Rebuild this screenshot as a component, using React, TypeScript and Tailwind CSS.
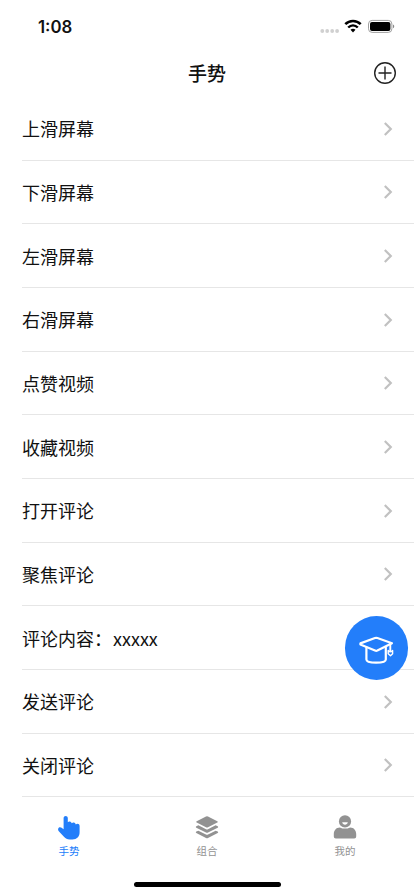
import React from "react";

const gestures = [
  { label: "上滑屏幕" },
  { label: "下滑屏幕" },
  { label: "左滑屏幕" },
  { label: "右滑屏幕" },
  { label: "点赞视频" },
  { label: "收藏视频" },
  { label: "打开评论" },
  { label: "聚焦评论" },
  { label: "评论内容：", value: "xxxxx" },
  { label: "发送评论" },
  { label: "关闭评论" },
];

function StatusBar() {
  return (
    <div className="flex h-[49px] shrink-0 items-start justify-between pr-[19px] pl-[38px]">
      <span className="mt-[15px] font-['Inter','Liberation_Sans',sans-serif] text-[16.8px] leading-6 font-semibold">1:08</span>
      <div className="mt-[19px] flex items-start">
        <svg width="19" height="16" viewBox="0 0 19 16" fill="#d0d0d0">
          <circle cx="2.3" cy="12" r="1.9" />
          <circle cx="7.2" cy="12" r="1.9" />
          <circle cx="12.2" cy="12" r="1.9" />
          <circle cx="17.1" cy="12" r="1.9" />
        </svg>
        <svg className="ml-[5px]" width="18" height="14" viewBox="0 0 18 14" fill="none" stroke="#000">
          <path d="M1.3 5.1C5.6.9 12.4.9 16.7 5.1" strokeWidth="2.6" />
          <path d="M4.2 8.5C7 5.6 11 5.6 13.8 8.5" strokeWidth="2.4" />
          <path d="M6.5 10.8C8 9.4 10 9.4 11.5 10.8L9 13.4Z" fill="#000" stroke="none" />
        </svg>
        <svg className="ml-[6px]" width="27" height="15" viewBox="0 0 27 15">
          <rect x="0.5" y="1.4" width="23.4" height="12" rx="3.6" fill="none" stroke="#a0a0a0" />
          <rect x="2" y="2.9" width="20.4" height="9" rx="2" />
          <path d="M25 5.6c1.7.5 1.7 3.2 0 3.7Z" fill="#888" />
        </svg>
      </div>
    </div>
  );
}

function Header() {
  return (
    <header className="grid h-12 shrink-0 grid-cols-[1fr_auto_1fr] items-center px-[17px]">
      <h1 className="col-start-2 text-[19px] leading-6 font-medium">手势</h1>
      <svg className="justify-self-end" width="24" height="24" viewBox="0 0 24 24" fill="none" stroke="#222" strokeWidth="1.4">
        <circle cx="12" cy="12" r="10.3" />
        <path d="M12 5.5v13M5.5 12h13" />
      </svg>
    </header>
  );
}

function GestureRow({ label, value }: { label: string; value?: string }) {
  return (
    <li className="ml-[22px] flex h-[63.67px] items-center justify-between border-b border-[#e6e6e6] pr-[21px]">
      <span className="text-[18px] leading-6">
        {label}
        {value && <span className="ml-px">{value}</span>}
      </span>
      <svg className="mt-px" width="10" height="14" viewBox="0 0 10 14" fill="none" stroke="#c1c1c1" strokeWidth="2.2">
        <path d="M1.8 1l6 6-6 6" />
      </svg>
    </li>
  );
}

function HelpButton() {
  return (
    <button aria-label="help" className="absolute top-[616.4px] left-[344.6px] flex h-[63.6px] w-[63.6px] items-center justify-center rounded-full bg-[#237efa]">
      <svg width="38" height="32" viewBox="0 0 38 32" fill="none" stroke="#fff" strokeWidth="2.2" strokeLinejoin="round" strokeLinecap="round">
        <path d="M3.4 11.4L18 6Q19.2 5.6 20.4 6L35 11.2L20.4 18.6Q19.2 19.1 18 18.6L3.4 12.6Z" />
        <path d="M9.4 15.4v12C9.4 31.6 28.8 31.6 28.8 27.4V15.4" />
        <path d="M33.3 12.2v7.2" strokeWidth="1.9" />
        <path d="M31.2 18.5l1 1h2.4l1-1v3.2l-2.1 2.1-2.3-2.1Z" strokeWidth="1.4" />
      </svg>
    </button>
  );
}

function HandIcon() {
  return (
    <svg width="24" height="26" viewBox="0 0 24 26" fill="currentColor">
      <path d="M6.6 15V3.1C6.6.4 10.8.4 10.8 3.1V7.2C12 6.2 14 6.4 14.8 8.3C16 7 18.1 7.5 18.8 9.5C20.2 8.1 22.6 8.7 22.6 11V17.3C22.6 22 19.8 24.4 15.5 24.4H12.7C10 24.4 8.7 23.4 7.2 21.9L1.8 16.2C.7 14.9.9 13.3 2 12.5C3.3 11.7 4.7 12.5 6.6 14.2Z" />
    </svg>
  );
}

function LayersIcon() {
  return (
    <svg width="24" height="26" viewBox="0 0 24 26" fill="currentColor">
      <path d="M11 1.6Q12 1.1 13 1.6L22.3 6.2Q23.6 6.9 22.3 7.6L13 12.3Q12 12.8 11 12.3L1.7 7.6Q.4 6.9 1.7 6.2Z" />
      <path d="M1.3 11.2L3.4 10.3L11 14.2Q12 14.7 13 14.2L20.6 10.3L22.7 11.2Q23.8 11.9 22.7 12.7L13 17.6Q12 18.1 11 17.6L1.3 12.7Q.2 11.9 1.3 11.2Z" />
      <path d="M1.3 16.6L3.4 15.7L11 19.6Q12 20.1 13 19.6L20.6 15.7L22.7 16.6Q23.8 17.3 22.7 18.1L13 23Q12 23.5 11 23L1.3 18.1Q.2 17.3 1.3 16.6Z" />
    </svg>
  );
}

function PersonIcon() {
  return (
    <svg width="24" height="26" viewBox="0 0 24 26" fill="currentColor">
      <circle cx="12" cy="6.4" r="6.1" />
      <path d="M9.2 7.3h5.6c-.3 3.2-5.3 3.2-5.6 0Z" fill="#fff" />
      <path d="M.8 19C.8 15.3 3.2 12.4 6.8 12.4Q12 14.8 17.2 12.4C20.8 12.4 23.2 15.3 23.2 19V21.6Q23.2 23.6 21.2 23.6H2.8Q.8 23.6 .8 21.6Z" />
    </svg>
  );
}

const tabs = [
  { label: "手势", Icon: HandIcon, color: "text-[#237efa]" },
  { label: "组合", Icon: LayersIcon, color: "text-[#929292]" },
  { label: "我的", Icon: PersonIcon, color: "text-[#929292]" },
];

export default function App() {
  return (
    <div className="relative flex h-[896px] w-[414px] flex-col overflow-hidden bg-white font-['Noto_Sans_CJK_SC',sans-serif] text-[#111]">
      <StatusBar />
      <Header />
      <ul className="h-[700.4px] shrink-0">
        {gestures.map((item) => (
          <GestureRow key={item.label} {...item} />
        ))}
      </ul>
      <nav className="grid h-[84.6px] shrink-0 grid-cols-3 pt-[18px]">
        {tabs.map(({ label, Icon, color }) => (
          <div key={label} className={`flex flex-col items-center ${color}`}>
            <Icon />
            <span className="mt-[2px] text-[10.5px] leading-4">{label}</span>
          </div>
        ))}
      </nav>
      <div className="ml-[133.5px] h-[5px] w-[147px] shrink-0 rounded-full bg-black" />
      <HelpButton />
    </div>
  );
}
